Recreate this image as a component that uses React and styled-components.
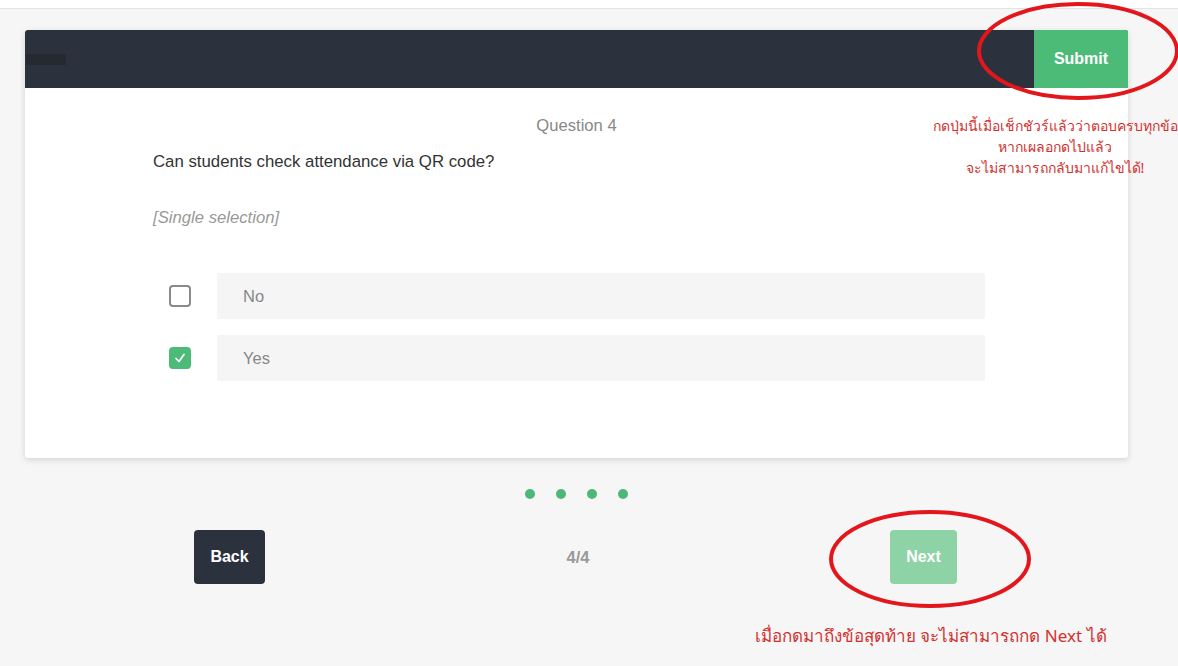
import React from 'react';
import styled, { createGlobalStyle } from 'styled-components';

const GlobalStyle = createGlobalStyle`
  html, body {
    margin: 0;
    padding: 0;
    background: #f6f6f6;
    font-family: "Liberation Sans", Arial, sans-serif;
    overflow: hidden;
  }
`;

const Page = styled.div`
  position: relative;
  width: 1178px;
  height: 666px;
  overflow: hidden;
  background: #f6f6f6;
`;

const TopStrip = styled.div`
  height: 8px;
  background: #fff;
  border-bottom: 1px solid #e3e3e3;
`;

const Column = styled.div`
  margin: 21px 0 0 25px;
  width: 1103px;
`;

const Card = styled.div`
  background: #fff;
  border-radius: 3px;
  box-shadow: 0 2px 6px rgba(0, 0, 0, 0.14);
  overflow: hidden;
`;

const Header = styled.div`
  height: 58px;
  background: #2c323d;
  display: flex;
  align-items: center;
  justify-content: space-between;
`;

const Stub = styled.div`
  width: 40px;
  height: 11px;
  margin-left: 1px;
  background: #252a31;
`;

const SubmitButton = styled.button`
  width: 94px;
  height: 58px;
  border: none;
  background: #4cbb77;
  color: #fff;
  font-family: inherit;
  font-size: 16px;
  font-weight: bold;
  cursor: pointer;
`;

const Body = styled.div`
  padding: 28px 143px 77px 128px;
`;

const QuestionNo = styled.div`
  text-align: center;
  color: #888;
  font-size: 16.6px;
  line-height: 20px;
  margin-left: -128px;
  margin-right: -143px;
`;

const QuestionText = styled.div`
  margin-top: 16px;
  color: #333;
  font-size: 16.8px;
  line-height: 20px;
`;

const Hint = styled.div`
  margin-top: 36px;
  color: #999;
  font-size: 16.7px;
  font-style: italic;
  line-height: 20px;
`;

const Options = styled.div`
  margin-top: 45px;
  display: flex;
  flex-direction: column;
  gap: 16px;
`;

const OptionRow = styled.label`
  display: flex;
  align-items: center;
  gap: 26px;
  padding-left: 16px;
  cursor: pointer;
`;

const Check = styled.span`
  width: 22px;
  height: 22px;
  box-sizing: border-box;
  border-radius: 4px;
  border: 2px solid ${(p) => (p.$on ? '#4cbb77' : '#8a8a8a')};
  background: ${(p) => (p.$on ? '#4cbb77' : '#fff')};
  display: flex;
  align-items: center;
  justify-content: center;
  flex-shrink: 0;
`;

const OptionBox = styled.div`
  width: 768px;
  height: 46px;
  box-sizing: border-box;
  padding-left: 26px;
  background: #f5f5f5;
  border-radius: 2px;
  display: flex;
  align-items: center;
  color: #888;
  font-size: 16.5px;
`;

const Dots = styled.div`
  margin-top: 31px;
  display: flex;
  justify-content: center;
  gap: 21px;
`;

const Dot = styled.span`
  width: 10px;
  height: 10px;
  border-radius: 50%;
  background: #4cb877;
`;

const Footer = styled.div`
  margin: 31px auto 0;
  width: 1041px;
  display: grid;
  grid-template-columns: 1fr 1fr 1fr;
  align-items: center;
  justify-items: center;
`;

const NavButton = styled.button`
  height: 54px;
  padding: 0 ${(p) => (p.$pad || 16)}px;
  border: none;
  border-radius: 4px;
  background: ${(p) => p.$bg};
  color: #fff;
  font-family: inherit;
  font-size: 16px;
  font-weight: bold;
`;

const Counter = styled.div`
  margin-left: 3px;
  color: #999;
  font-size: 16.5px;
  font-weight: bold;
`;

const Note = styled.div`
  position: absolute;
  color: #d2312f;
  font-family: "Noto Sans", "DejaVu Sans", sans-serif;
  font-size: ${(p) => p.$size}px;
  line-height: ${(p) => p.$lh}px;
  text-align: center;
  white-space: nowrap;
`;

const Marks = styled.svg`
  position: absolute;
  left: 0;
  top: 0;
  pointer-events: none;
`;

const options = [
  { label: 'No', on: false },
  { label: 'Yes', on: true },
];

export default function App() {
  return (
    <Page>
      <GlobalStyle />
      <TopStrip />
      <Column>
        <Card>
          <Header>
            <Stub />
            <SubmitButton>Submit</SubmitButton>
          </Header>
          <Body>
            <QuestionNo>Question 4</QuestionNo>
            <QuestionText>Can students check attendance via QR code?</QuestionText>
            <Hint>[Single selection]</Hint>
            <Options>
              {options.map((o) => (
                <OptionRow key={o.label}>
                  <Check $on={o.on}>
                    {o.on && (
                      <svg width="14" height="14" viewBox="0 0 14 14">
                        <path d="M3 7.5 L6 10.5 L11 3.5" fill="none" stroke="#fff" strokeWidth="1.7" strokeLinecap="round" strokeLinejoin="round" />
                      </svg>
                    )}
                  </Check>
                  <OptionBox>{o.label}</OptionBox>
                </OptionRow>
              ))}
            </Options>
          </Body>
        </Card>
        <Dots>
          {[0, 1, 2, 3].map((i) => <Dot key={i} />)}
        </Dots>
        <Footer>
          <NavButton $bg="#2c323d" $pad={16}>Back</NavButton>
          <Counter>4/4</Counter>
          <NavButton $bg="#8ed3a6" $pad={16}>Next</NavButton>
        </Footer>
      </Column>

      <Note $size={14} $lh={21} style={{ left: 1055, top: 115, transform: 'translateX(-50%)' }}>
        กดปุ่มนี้เมื่อเช็กชัวร์แล้วว่าตอบครบทุกข้อ<br />
        หากเผลอกดไปแล้ว<br />
        จะไม่สามารถกลับมาแก้ไขได้!
      </Note>
      <Note $size={17} $lh={24} style={{ left: 755, top: 624 }}>
        เมื่อกดมาถึงข้อสุดท้าย จะไม่สามารถกด Next ได้
      </Note>
      <Marks width="1178" height="666">
        <ellipse cx="1078" cy="51" rx="99" ry="47" fill="none" stroke="#e3161c" strokeWidth="4" />
        <ellipse cx="930" cy="559" rx="99" ry="47" fill="none" stroke="#e3161c" strokeWidth="4" />
      </Marks>
    </Page>
  );
}
